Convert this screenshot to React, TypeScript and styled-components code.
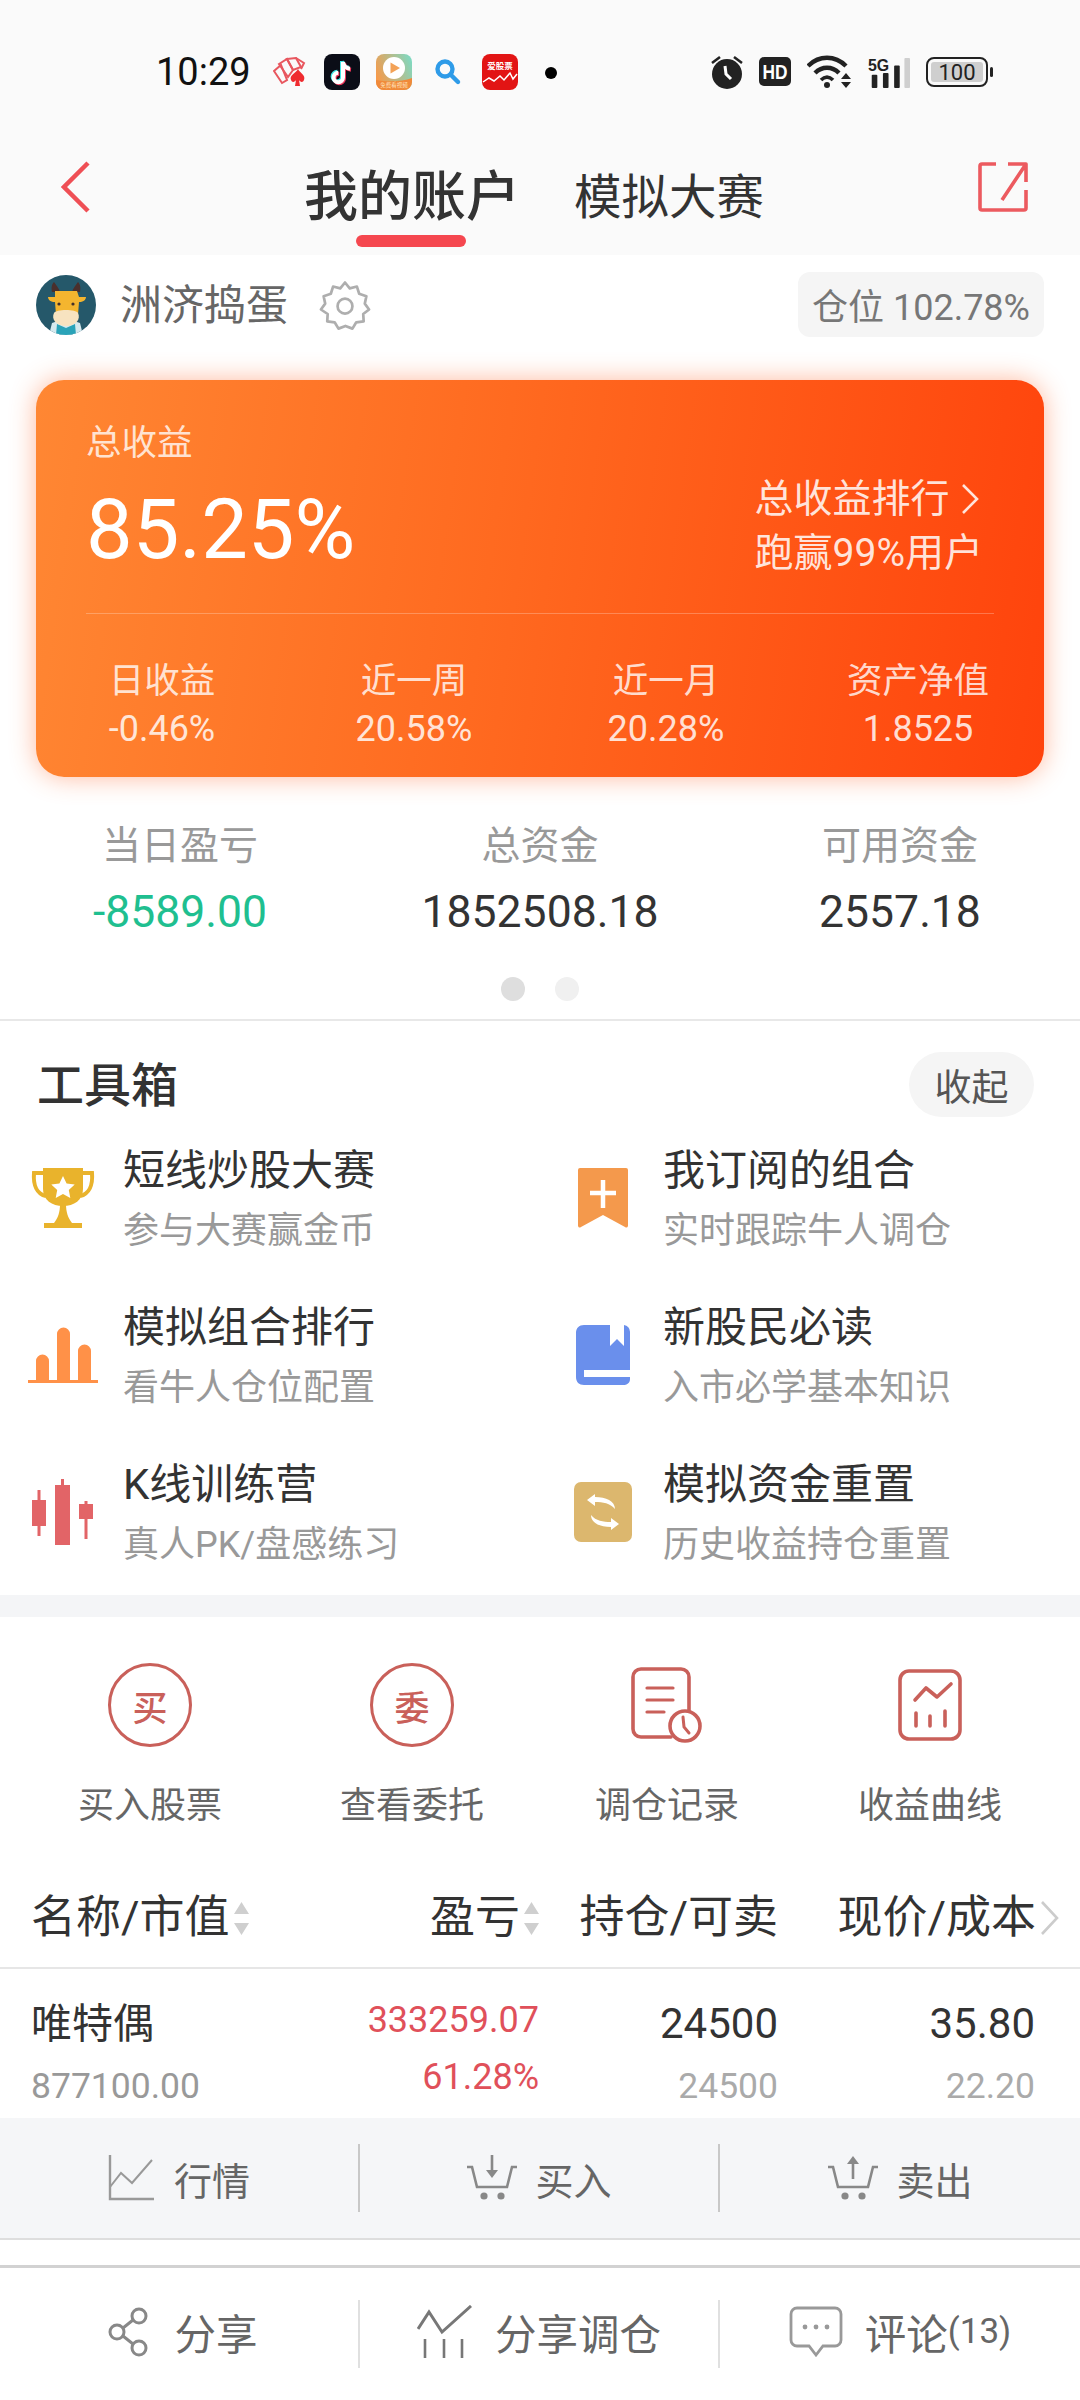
import React from "react";
import styled, { createGlobalStyle } from "styled-components";

const GlobalStyle = createGlobalStyle`
	html, body {
		margin: 0;
		padding: 0;
		background: #fff;
	}
	* {
		box-sizing: border-box;
	}
`;

const Page = styled.div`
	width: 1080px;
	height: 2400px;
	overflow: hidden;
	background: #fff;
	color: #333;
	font-family: Roboto, "Noto Sans CJK SC", sans-serif;
`;

const TopArea = styled.header`
	height: 255px;
	background: #fafafa;
`;

const StatusBar = styled.div`
	height: 144px;
	padding: 0 86px 0 156px;
	display: flex;
	align-items: center;
	justify-content: space-between;
	color: #111;
`;

const StatusGroup = styled.div`
	display: flex;
	align-items: center;
	gap: 16px;
`;

const Clock = styled.span`
	font-size: 38px;
	line-height: 44px;
	margin-right: 6px;
`;

const NavBar = styled.nav`
	height: 111px;
	padding: 0 52px 25px 61px;
	display: flex;
	align-items: center;
`;

const Tabs = styled.div`
	margin: 22px auto 0;
	display: flex;
	align-items: center;
	gap: 54px;
`;

const Tab = styled.span<{ $active?: boolean }>`
	position: relative;
	font-size: ${(p) => (p.$active ? "54px" : "47.500px")};
	line-height: 60px;
	font-weight: ${(p) => (p.$active ? 500 : 400)};
	color: #333;

	${(p) =>
		p.$active &&
		`&::after {
			content: "";
			position: absolute;
			left: 52px;
			top: 67px;
			width: 110px;
			height: 12px;
			border-radius: 6px;
			background: #f5474f;
		}`}
`;

const UserRow = styled.section`
	height: 100px;
	padding: 0 36px;
	display: flex;
	align-items: center;
`;

const UserName = styled.span`
	margin: 2px 30px 0 24px;
	font-size: 42px;
	line-height: 50px;
	color: #666;
`;

const PositionChip = styled.span`
	margin: -2px 0 0 auto;
	width: 246px;
	height: 65px;
	border-radius: 12px;
	background: #f5f5f5;
	color: #777;
	font-size: 36px;
	display: flex;
	align-items: center;
	justify-content: center;
`;

const ProfitCard = styled.section`
	margin: 25px 36px 0;
	height: 397px;
	padding: 0 50px;
	border-radius: 28px;
	background: linear-gradient(98deg, #ff8733 0%, #ff6a20 45%, #ff430c 100%);
	box-shadow: 0 0 26px rgba(255, 100, 40, 0.45);
	color: #fff;
`;

const CardTop = styled.div`
	height: 234px;
	padding-top: 40px;
	display: flex;
	justify-content: space-between;
	border-bottom: 1px solid rgba(255, 255, 255, 0.25);
`;

const CardLabel = styled.div`
	font-size: 35.500px;
	line-height: 46px;
	color: rgba(255, 255, 255, 0.8);
`;

const CardValue = styled.div`
	margin-top: 22px;
	font-size: 83px;
	line-height: 84px;
`;

const RankBlock = styled.div`
	margin: 52px 11px 0 0;
	font-size: 39px;
	line-height: 54px;
	color: rgba(255, 255, 255, 0.85);
`;

const RankLine = styled.div`
	display: flex;
	align-items: center;
	gap: 10px;
`;

const CardStats = styled.div`
	margin: 0 -50px;
	padding-top: 44px;
	display: grid;
	grid-template-columns: repeat(4, 1fr);
`;

const CardStat = styled.div`
	text-align: center;
`;

const CardStatValue = styled.div`
	margin-top: 2px;
	font-size: 36px;
	line-height: 46px;
	color: rgba(255, 255, 255, 0.82);
`;

const Summary = styled.section`
	padding: 46px 0 18px;
	border-bottom: 2px solid #e8e8e8;
`;

const SummaryGrid = styled.div`
	display: grid;
	grid-template-columns: repeat(3, 1fr);
	text-align: center;
`;

const SummaryLabel = styled.div`
	font-size: 39px;
	line-height: 46px;
	color: #999;
`;

const SummaryValue = styled.div<{ $green?: boolean }>`
	margin-top: 18px;
	font-size: 44.500px;
	line-height: 50px;
	color: ${(p) => (p.$green ? "#1fbf90" : "#333")};
`;

const Dots = styled.div`
	margin-top: 40px;
	display: flex;
	justify-content: center;
	gap: 30px;
`;

const Dot = styled.i<{ $on?: boolean }>`
	width: 24px;
	height: 24px;
	border-radius: 50%;
	background: ${(p) => (p.$on ? "#dedede" : "#f0f0f0")};
`;

const Tools = styled.section`
	padding: 31px 46px 29px 28px;
	border-bottom: 22px solid #f4f5f7;
`;

const ToolsHead = styled.div`
	height: 65px;
	padding-left: 9px;
	display: flex;
	align-items: center;
	justify-content: space-between;
`;

const ToolsTitle = styled.h2`
	margin: 3px 0 0;
	font-size: 47px;
	line-height: 56px;
	font-weight: 500;
	color: #333;
`;

const CollapseChip = styled.span`
	width: 125px;
	height: 65px;
	border-radius: 33px;
	background: #f5f5f5;
	color: #555;
	font-size: 37px;
	display: flex;
	align-items: center;
	justify-content: center;
`;

const ToolsGrid = styled.div`
	margin-top: 27px;
	display: grid;
	grid-template-columns: 540px 1fr;
	row-gap: 49px;
`;

const ToolItem = styled.div`
	height: 108px;
	display: flex;
	align-items: center;
	gap: 25px;
`;

const ToolIcon = styled.div`
	width: 70px;
	height: 70px;
	flex: none;
	display: flex;
	align-items: center;
	justify-content: center;
`;

const ToolTitle = styled.div`
	margin-top: 2px;
	font-size: 42px;
	line-height: 50px;
	color: #333;
`;

const ToolSub = styled.div`
	margin-top: 13px;
	font-size: 36px;
	line-height: 44px;
	color: #999;
`;

const Actions = styled.section`
	padding: 46px 0 41px 19px;
	display: grid;
	grid-template-columns: 262px 262px 248px 278px;
`;

const ActionItem = styled.div`
	display: flex;
	flex-direction: column;
	align-items: center;
`;

const ActionIcon = styled.div`
	height: 84px;
	display: flex;
	align-items: center;
	justify-content: center;
`;

const RoundBadge = styled.span`
	width: 84px;
	height: 84px;
	border: 3px solid #c9605a;
	border-radius: 50%;
	color: #c9605a;
	font-size: 35px;
	font-weight: 500;
	display: flex;
	align-items: center;
	justify-content: center;
`;

const ActionLabel = styled.div`
	margin-top: 37px;
	font-size: 36px;
	line-height: 44px;
	color: #666;
`;

const TableGrid = styled.div`
	padding-left: 31px;
	display: grid;
	grid-template-columns: 232px 276px 239px 257px;
`;

const TableHead = styled(TableGrid)`
	height: 100px;
	border-bottom: 2px solid #e6e6e6;
	align-items: center;
`;

const HeadCell = styled.div<{ $left?: boolean }>`
	display: flex;
	align-items: center;
	justify-content: ${(p) => (p.$left ? "flex-start" : "flex-end")};
	gap: 4px;
	font-size: 45px;
	line-height: 56px;
	white-space: nowrap;
	color: #333;
`;

const SortGlyph = styled.svg`
	flex: none;
`;

const MoreChevron = styled.svg`
	flex: none;
	margin-right: -25px;
`;

const TableRow = styled(TableGrid)`
	height: 149px;
	padding-top: 32px;
`;

const NameCell = styled.div`
	font-size: 41px;
	line-height: 46px;
`;

const GainCell = styled.div`
	margin-top: -4px;
	text-align: right;
	font-size: 36px;
	line-height: 46px;
	color: #e0505a;
`;

const GainLine = styled.div`
	& + & {
		margin-top: 11px;
	}
`;

const NumCell = styled.div`
	text-align: right;
	font-size: 42px;
	line-height: 46px;
	color: #333;
`;

const SubNum = styled.div<{ $dark?: boolean }>`
	margin-top: 17px;
	font-size: 35.500px;
	line-height: 44px;
	color: ${(p) => (p.$dark ? "#999" : "#aaa")};
`;

const ThreeCols = styled.div`
	display: grid;
	grid-template-columns: 358px 360px 362px;
	align-items: center;
`;

const StockBar = styled(ThreeCols)`
	height: 122px;
	background: #f5f6f8;
	border-bottom: 2px solid #dedede;
`;

const BottomBar = styled(ThreeCols)`
	margin-top: 25px;
	height: 134px;
	border-top: 3px solid #d2d2d2;
`;

const BarButton = styled.div<{ $line?: boolean; $gap?: number; $soft?: boolean }>`
	height: 68px;
	padding: ${(p) => (p.$soft ? `0 0 4px ${p.$line ? 0 : 8}px` : "0")};
	display: flex;
	align-items: center;
	justify-content: center;
	gap: ${(p) => p.$gap ?? 20}px;
	font-size: ${(p) => (p.$soft ? 41.5 : 38)}px;
	color: #666;
	border-left: ${(p) => (p.$line ? `2px solid ${p.$soft ? "#e0e0e0" : "#c8c8c8"}` : "none")};
`;

const Count = styled.span`
	font-size: 35px;
	margin-left: -22px;
`;

const StatusTime = () => <Clock>10:29</Clock>;

const PokerIcon = () => (
	<svg width="35" height="30" viewBox="0 0 35 30" fill="none" stroke="#e8575f" strokeWidth="2">
		<path d="M1 14 8 8l6 15-5 3z" />
		<path d="M6 7 14 2l6 11-5 7z" />
		<path d="M14 2l9-1 5 9-8 3z" />
		<path d="M23 1l8 5-3 6" />
		<path d="M25 12c2 4 8 6 6 11-1 3-4 2-5 0l1 6h-5l1-6c-1 2-4 3-5 0-2-5 5-7 7-11z" fill="#ef2b2f" stroke="none" />
	</svg>
);

const TikTokIcon = () => (
	<svg width="36" height="36" viewBox="0 0 36 36" fill="none" strokeWidth="4">
		<rect width="36" height="36" rx="8" fill="#0b0d17" />
		<g stroke="#3fe6e6">
			<path d="M18 7v15.500a4.700 4.700 0 1 1-4.700-4.700" />
			<path d="M18 7c.5 4 3 6.300 7 6.700" />
		</g>
		<g stroke="#f0365b">
			<path d="M20 9v15.500a4.700 4.700 0 1 1-4.700-4.700" />
			<path d="M20 9c.5 4 3 6.300 7 6.700" />
		</g>
		<g stroke="#fff">
			<path d="M19 8v15.500a4.700 4.700 0 1 1-4.700-4.700" />
			<path d="M19 8c.5 4 3 6.300 7 6.700" />
		</g>
	</svg>
);

const VideoIcon = () => (
	<svg width="36" height="36" viewBox="0 0 36 36">
		<defs>
			<linearGradient id="videoBg" x1="0" y1="0.6" x2="1" y2="0.2">
				<stop offset="0" stopColor="#f79a4a" />
				<stop offset="1" stopColor="#7fd9c1" />
			</linearGradient>
		</defs>
		<rect width="36" height="36" rx="8" fill="url(#videoBg)" />
		<path d="M0 26c10 2 26 2 36-2v4a8 8 0 0 1-8 8H8a8 8 0 0 1-8-8z" fill="#f08a3a" />
		<circle cx="18" cy="14" r="11" fill="#fff" />
		<path d="M14.500 8.500 24 14l-9.500 5.500z" fill="#f3a257" />
		<text x="18" y="33" textAnchor="middle" fontSize="5.500" fill="#ffe2bd">免费看视频</text>
	</svg>
);

const SearchIcon = () => (
	<svg width="38" height="36" viewBox="0 0 38 36" fill="none" stroke="#2e9be8" strokeWidth="4.400" strokeLinecap="round">
		<circle cx="17" cy="15" r="7.500" />
		<path d="M23 21l7 7" />
	</svg>
);

const StockAppIcon = () => (
	<svg width="36" height="36" viewBox="0 0 36 36" fill="none">
		<rect width="36" height="36" rx="8" fill="#e21414" />
		<text x="18" y="15" textAnchor="middle" fontSize="8.500" fontWeight="700" fill="#fff">爱股票</text>
		<path d="M1 28l6-4 5 3 6-5 4 4 6-7 3 6 4-5" stroke="#fff" strokeWidth="1.500" />
	</svg>
);

const NoticeDot = () => (
	<svg width="34" height="36" viewBox="0 0 34 36">
		<circle cx="17" cy="19" r="6" fill="#000" />
	</svg>
);

const AlarmIcon = () => (
	<svg width="32" height="34" viewBox="0 0 32 34" fill="none">
		<circle cx="16" cy="19" r="15" fill="#222" />
		<path d="M14 11l1 8 5 5" stroke="#fff" strokeWidth="3" />
		<path d="M1 8l8-6M31 8l-8-6" stroke="#222" strokeWidth="2.600" />
	</svg>
);

const HdIcon = () => (
	<svg width="32" height="30" viewBox="0 0 32 30">
		<rect width="32" height="29" rx="5" fill="#222" />
		<text x="16" y="22" textAnchor="middle" fontSize="20" fontWeight="700" fill="#fff" fontFamily="Liberation Sans" textLength="25" lengthAdjust="spacingAndGlyphs">HD</text>
	</svg>
);

const WifiIcon = () => (
	<svg width="45" height="34" viewBox="0 0 45 34" fill="none" stroke="#222" strokeWidth="4.400">
		<path d="M1 11C12 0 28 0 39 11" />
		<path d="M8 18c7-7 17-7 24 0" />
		<path d="M14 25c4-4 8-4 12 0" strokeWidth="3.600" />
		<circle cx="20" cy="30" r="3" fill="#222" stroke="none" />
		<path d="M39 18l5 6H34zM34 27h10l-5 6z" fill="#222" stroke="none" />
	</svg>
);

const SignalIcon = () => (
	<svg width="42" height="33" viewBox="0 0 45 33">
		<text x="0" y="15" fontSize="17" fontWeight="700" fill="#222" fontFamily="Liberation Sans">5G</text>
		<rect x="4" y="19" width="6" height="14" rx="1" fill="#222" />
		<rect x="16" y="17" width="6" height="16" rx="1" fill="#222" />
		<rect x="28" y="9" width="6" height="24" rx="1" fill="#222" />
		<rect x="39" y="1" width="6" height="32" rx="1" fill="#cfcfcf" />
	</svg>
);

const BatteryIcon = () => (
	<svg width="68" height="30" viewBox="0 0 68 30" fill="none">
		<rect x="1" y="1" width="60" height="28" rx="7" stroke="#222" strokeWidth="2" />
		<rect x="5" y="5" width="52" height="20" rx="3" fill="#cfcfcf" />
		<text x="31" y="23" textAnchor="middle" fontSize="22" fill="#222" fontFamily="Roboto">100</text>
		<rect x="64" y="10" width="3" height="10" rx="1.500" fill="#222" />
	</svg>
);

const BackIcon = () => (
	<svg width="29" height="52" viewBox="0 0 29 52" fill="none" stroke="#ef4f55" strokeWidth="4.500">
		<path d="M27 2 3 26l24 24" />
	</svg>
);

const ExportIcon = () => (
	<svg width="50" height="50" viewBox="0 0 50 50" fill="none" stroke="#ec5a5f" strokeWidth="3.600" strokeLinejoin="round">
		<path d="M18 2H4a2 2 0 0 0-2 2v42a2 2 0 0 0 2 2h42a2 2 0 0 0 2-2V28" />
		<path d="M30 2h18v18M48 2 24 38" />
	</svg>
);

const CowAvatar = () => (
	<svg width="60" height="60" viewBox="0 0 60 60">
		<clipPath id="avatarClip">
			<circle cx="30" cy="30" r="30" />
		</clipPath>
		<g clipPath="url(#avatarClip)">
			<rect width="60" height="60" fill="#25586a" />
			<path d="M13 60l3-12c7-3 21-3 28 0l3 12z" fill="#d5e9ee" />
			<path d="M21 49l9 4 9-4 1 11H20z" fill="#2aa3b8" />
			<path d="M16 17c-1-5 0-8 2-10 2 3 5 6 6 10zM44 17c1-5 0-8-2-10-2 3-5 6-6 10z" fill="#4a2f2c" />
			<path d="M19 16h22l2 6h7c0 3-3 5-7 5l-1 13H20l-1-13c-4 0-7-2-7-5h7z" fill="#f4b52f" />
			<path d="M18 38c2-4 22-4 24 0 3 6-2 13-12 13s-15-7-12-13z" fill="#f7e3c0" />
			<circle cx="23" cy="29" r="1.600" fill="#44302a" />
			<circle cx="37" cy="29" r="1.600" fill="#44302a" />
		</g>
	</svg>
);

const GearIcon = () => (
	<svg width="54" height="54" viewBox="0 0 24 24" fill="none" stroke="#aeaeae" strokeWidth="1.200" strokeLinejoin="round">
		<path d="M12 2l2.100 2.600 3.200-.8 1 3.200 3.200 1.100-.7 3.300L22.700 14l-2.600 2 .2 3.300-3.300.4-1.700 2.800-3.100-1.200-3.100 1.200-1.700-2.800-3.300-.4.200-3.300L1.300 14l1.900-2.600-.7-3.300L5.700 7l1-3.200 3.200.8z" />
		<circle cx="12" cy="12.500" r="3.300" />
	</svg>
);

const SmallChevron = () => (
	<svg width="20" height="32" viewBox="0 0 20 32" fill="none" stroke="rgba(255,255,255,0.85)" strokeWidth="2.600">
		<path d="M3 2l14 14L3 30" />
	</svg>
);

const TrophyIcon = () => (
	<svg width="66" height="62" viewBox="0 0 66 62">
		<path d="M14 6H4c-1 12 3 21 12 23M52 6h10c1 12-3 21-12 23" fill="none" stroke="#e9b32c" strokeWidth="4" />
		<path d="M13 1h40v21c0 11-9 17-20 17S13 33 13 22z" fill="#e9b32c" />
		<path d="M30 37h6c0 8 2 14 6 19H24c4-5 6-11 6-19z" fill="#e9b32c" />
		<rect x="14" y="56" width="38" height="5" fill="#e9b32c" />
		<path d="M33 9l3.600 7.400 8.100 1-5.900 5.600 1.500 8-7.300-3.900-7.300 3.900 1.500-8-5.900-5.600 8.100-1z" fill="#fff" />
	</svg>
);

const BookmarkIcon = () => (
	<svg width="50" height="60" viewBox="0 0 50 60">
		<path d="M2 0h46a2 2 0 0 1 2 2v56a2 2 0 0 1-3 1L25 47 3 59a2 2 0 0 1-3-1V2a2 2 0 0 1 2-2z" fill="#f4994c" />
		<path d="M25 12v28M12 25h26" stroke="#fff" strokeWidth="4.500" />
	</svg>
);

const BarsIcon = () => (
	<svg width="70" height="58" viewBox="0 0 70 58" fill="#ff9148">
		<path d="M8 54V34a6.500 6.500 0 0 1 13 0v20zM29 54V7a6.500 6.500 0 0 1 13 0v47zM50 54V24a6.500 6.500 0 0 1 13 0v30z" transform="translate(0 1)" />
		<rect x="0" y="54" width="70" height="3" />
	</svg>
);

const BookIcon = () => (
	<svg width="54" height="60" viewBox="0 0 54 60">
		<path d="M8 0C3 0 0 3 0 8v44c0 5 3 8 8 8h39c4 0 7-2 7-6V7a7 7 0 0 0-6-7v21l-7-7-7 7V0z" fill="#6a8fec" />
		<rect x="8" y="45" width="46" height="7" fill="#fff" />
	</svg>
);

const CandleIcon = () => (
	<svg width="62" height="66" viewBox="0 0 62 66" fill="#e26467">
		<rect x="0" y="21" width="14" height="26" />
		<rect x="5.500" y="11" width="3" height="46" />
		<rect x="23" y="6" width="15" height="60" />
		<rect x="29" y="0" width="3" height="8" />
		<rect x="47" y="25" width="14" height="15" />
		<rect x="52.500" y="22" width="3" height="38" />
	</svg>
);

const SwapIcon = () => (
	<svg width="58" height="60" viewBox="0 0 58 60" fill="none">
		<rect width="58" height="60" rx="7" fill="#dcb76e" />
		<path d="M21 12l-8 6 8 6v-4c8 0 15 1 20 7 0-8-9-12-20-12z" fill="#fff" />
		<path d="M37 48l8-6-8-6v4c-8 0-15-1-20-7 0 8 9 12 20 12z" fill="#fff" />
	</svg>
);

const RecordIcon = () => (
	<svg width="72" height="76" viewBox="0 0 72 76" fill="none" stroke="#c9605a" strokeWidth="3.600" strokeLinecap="round">
		<path d="M40 70H10a8 8 0 0 1-8-8V10a8 8 0 0 1 8-8h40a8 8 0 0 1 8 8v36" />
		<path d="M16 21h26M16 33h26M16 45h17" strokeWidth="3.200" />
		<circle cx="54" cy="59" r="15" fill="#fff" />
		<path d="M52 50l1 10 5 6" strokeWidth="3" />
	</svg>
);

const ProfitCurveIcon = () => (
	<svg width="64" height="72" viewBox="0 0 64 72" fill="none" stroke="#c9605a" strokeWidth="3.600" strokeLinecap="round" strokeLinejoin="round">
		<rect x="2" y="2" width="60" height="68" rx="9" />
		<path d="M17 31l11-12 11 9 14-13" />
		<path d="M18 44v13M32 47v10M47 42v15" />
	</svg>
);

const SortArrows = () => (
	<SortGlyph width="15" height="33" viewBox="0 0 15 33" fill="#cfcfcf">
		<path d="M7.500 0 15 12H0zM0 21h15L7.500 33z" />
	</SortGlyph>
);

const LineChartIcon = () => (
	<svg width="46" height="46" viewBox="0 0 46 46" fill="none" stroke="#999" strokeWidth="2.400">
		<path d="M2 0v44h44" />
		<path d="M2 32l11-14 11 10L44 5" strokeWidth="2" />
	</svg>
);

const CartIcon = ({ up }: { up?: boolean }) => (
	<svg width="52" height="46" viewBox="0 0 52 46" fill="none" stroke="#888" strokeWidth="2.600">
		<path d="M1 12h5l5 20h30l5-20h5" />
		{up ? <path d="M26 24V6" /> : <path d="M26 0v18" />}
		{up ? <path d="M20 9l6-8 6 8z" fill="#888" stroke="none" /> : <path d="M20 15l6 8 6-8z" fill="#888" stroke="none" />}
		<circle cx="18" cy="41" r="3.600" fill="#888" stroke="none" />
		<circle cx="35" cy="41" r="3.600" fill="#888" stroke="none" />
	</svg>
);

const ShareNodesIcon = () => (
	<svg width="42" height="50" viewBox="0 0 42 50" fill="none" stroke="#888" strokeWidth="3">
		<circle cx="31" cy="9" r="7" />
		<circle cx="31" cy="41" r="7" />
		<circle cx="9" cy="25" r="7" />
		<path d="M25 13 15 21M15 29l10 8" />
	</svg>
);

const TrendIcon = () => (
	<svg width="56" height="54" viewBox="0 0 56 54" fill="none" stroke="#777" strokeWidth="3">
		<path d="M1 24 12 7l13 20L54 1" />
		<path d="M8 34v19M27 34v19M45 34v19" strokeWidth="2.600" />
	</svg>
);

const CommentIcon = () => (
	<svg width="54" height="52" viewBox="0 0 54 52" fill="none" stroke="#999" strokeWidth="2.800">
		<path d="M8 2h38a6 6 0 0 1 6 6v26a6 6 0 0 1-6 6H34l-7 9-7-9H8a6 6 0 0 1-6-6V8a6 6 0 0 1 6-6z" />
		<circle cx="16" cy="21" r="2.400" fill="#999" stroke="none" />
		<circle cx="27" cy="21" r="2.400" fill="#999" stroke="none" />
		<circle cx="38" cy="21" r="2.400" fill="#999" stroke="none" />
	</svg>
);

const cardStats = [
	{ label: "日收益", value: "-0.46%" },
	{ label: "近一周", value: "20.58%" },
	{ label: "近一月", value: "20.28%" },
	{ label: "资产净值", value: "1.8525" },
];

const summary = [
	{ label: "当日盈亏", value: "-8589.00", green: true },
	{ label: "总资金", value: "1852508.18" },
	{ label: "可用资金", value: "2557.18" },
];

const tools = [
	{ icon: <TrophyIcon />, title: "短线炒股大赛", sub: "参与大赛赢金币" },
	{ icon: <BookmarkIcon />, title: "我订阅的组合", sub: "实时跟踪牛人调仓" },
	{ icon: <BarsIcon />, title: "模拟组合排行", sub: "看牛人仓位配置" },
	{ icon: <BookIcon />, title: "新股民必读", sub: "入市必学基本知识" },
	{ icon: <CandleIcon />, title: "K线训练营", sub: "真人PK/盘感练习" },
	{ icon: <SwapIcon />, title: "模拟资金重置", sub: "历史收益持仓重置" },
];

const actions = [
	{ icon: <RoundBadge>买</RoundBadge>, label: "买入股票" },
	{ icon: <RoundBadge>委</RoundBadge>, label: "查看委托" },
	{ icon: <RecordIcon />, label: "调仓记录" },
	{ icon: <ProfitCurveIcon />, label: "收益曲线" },
];

const App = () => {
	return (
		<Page>
			<GlobalStyle />
			<TopArea>
				<StatusBar>
					<StatusGroup>
						<StatusTime />
						<PokerIcon />
						<TikTokIcon />
						<VideoIcon />
						<SearchIcon />
						<StockAppIcon />
						<NoticeDot />
					</StatusGroup>
					<StatusGroup>
						<AlarmIcon />
						<HdIcon />
						<WifiIcon />
						<SignalIcon />
						<BatteryIcon />
					</StatusGroup>
				</StatusBar>
				<NavBar>
					<BackIcon />
					<Tabs>
						<Tab $active>我的账户</Tab>
						<Tab>模拟大赛</Tab>
					</Tabs>
					<ExportIcon />
				</NavBar>
			</TopArea>

			<UserRow>
				<CowAvatar />
				<UserName>洲济捣蛋</UserName>
				<GearIcon />
				<PositionChip>仓位 102.78%</PositionChip>
			</UserRow>

			<ProfitCard>
				<CardTop>
					<div>
						<CardLabel>总收益</CardLabel>
						<CardValue>85.25%</CardValue>
					</div>
					<RankBlock>
						<RankLine>
							总收益排行
							<SmallChevron />
						</RankLine>
						<div>跑赢99%用户</div>
					</RankBlock>
				</CardTop>
				<CardStats>
					{cardStats.map((item) => (
						<CardStat key={item.label}>
							<CardLabel>{item.label}</CardLabel>
							<CardStatValue>{item.value}</CardStatValue>
						</CardStat>
					))}
				</CardStats>
			</ProfitCard>

			<Summary>
				<SummaryGrid>
					{summary.map((item) => (
						<div key={item.label}>
							<SummaryLabel>{item.label}</SummaryLabel>
							<SummaryValue $green={item.green}>{item.value}</SummaryValue>
						</div>
					))}
				</SummaryGrid>
				<Dots>
					<Dot $on />
					<Dot />
				</Dots>
			</Summary>

			<Tools>
				<ToolsHead>
					<ToolsTitle>工具箱</ToolsTitle>
					<CollapseChip>收起</CollapseChip>
				</ToolsHead>
				<ToolsGrid>
					{tools.map((tool) => (
						<ToolItem key={tool.title}>
							<ToolIcon>{tool.icon}</ToolIcon>
							<div>
								<ToolTitle>{tool.title}</ToolTitle>
								<ToolSub>{tool.sub}</ToolSub>
							</div>
						</ToolItem>
					))}
				</ToolsGrid>
			</Tools>

			<Actions>
				{actions.map((action) => (
					<ActionItem key={action.label}>
						<ActionIcon>{action.icon}</ActionIcon>
						<ActionLabel>{action.label}</ActionLabel>
					</ActionItem>
				))}
			</Actions>

			<TableHead>
				<HeadCell $left>
					名称/市值
					<SortArrows />
				</HeadCell>
				<HeadCell>
					盈亏
					<SortArrows />
				</HeadCell>
				<HeadCell>持仓/可卖</HeadCell>
				<HeadCell>
					现价/成本
					<MoreChevron width="20" height="34" viewBox="0 0 20 34" fill="none" stroke="#ccc" strokeWidth="2.600">
						<path d="M2 1l15 16L2 33" />
					</MoreChevron>
				</HeadCell>
			</TableHead>

			<TableRow>
				<NameCell>
					唯特偶
					<SubNum $dark>877100.00</SubNum>
				</NameCell>
				<GainCell>
					<GainLine>333259.07</GainLine>
					<GainLine>61.28%</GainLine>
				</GainCell>
				<NumCell>
					24500
					<SubNum>24500</SubNum>
				</NumCell>
				<NumCell>
					35.80
					<SubNum>22.20</SubNum>
				</NumCell>
			</TableRow>

			<StockBar>
				<BarButton>
					<LineChartIcon />
					行情
				</BarButton>
				<BarButton $line $gap={17}>
					<CartIcon />
					买入
				</BarButton>
				<BarButton $line $gap={17}>
					<CartIcon up />
					卖出
				</BarButton>
			</StockBar>

			<BottomBar>
				<BarButton $soft $gap={24}>
					<ShareNodesIcon />
					分享
				</BarButton>
				<BarButton $soft $line $gap={22}>
					<TrendIcon />
					分享调仓
				</BarButton>
				<BarButton $soft $line $gap={22}>
					<CommentIcon />
					评论
					<Count>(13)</Count>
				</BarButton>
			</BottomBar>
		</Page>
	);
};

export default App;
